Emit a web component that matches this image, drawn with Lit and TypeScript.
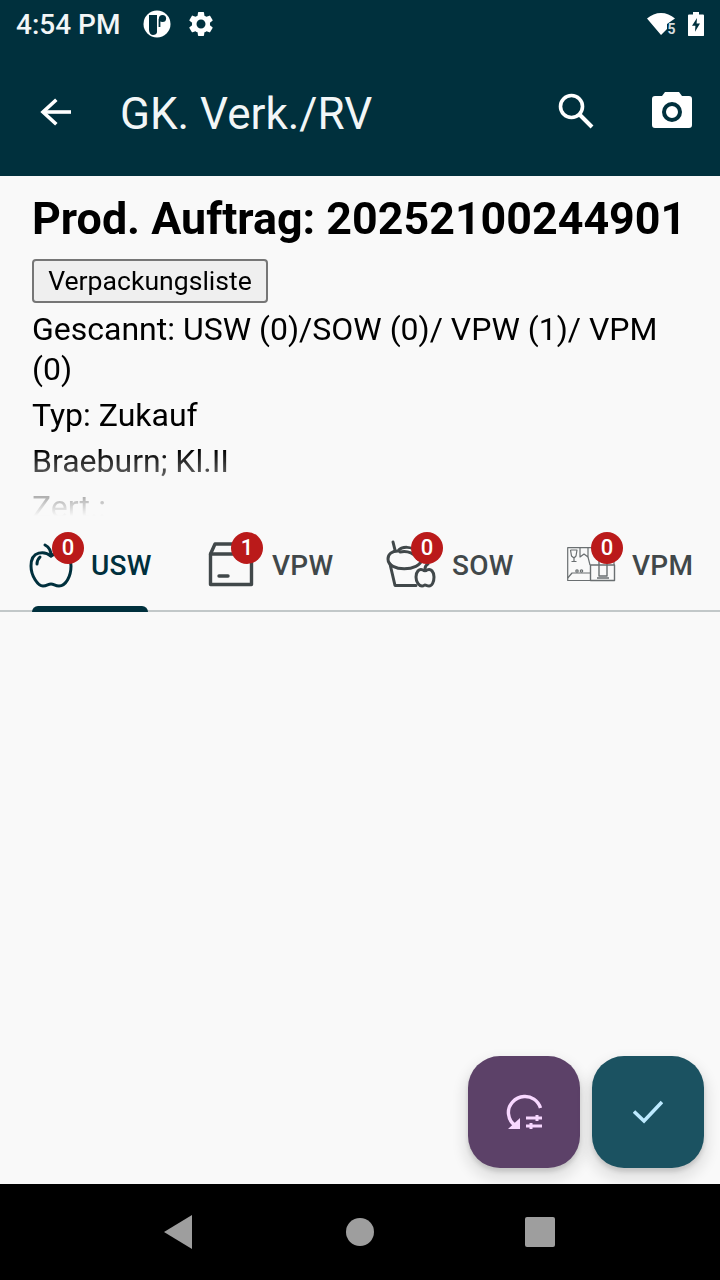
import { LitElement, html, css, svg } from 'lit'
import { customElement } from 'lit/decorators.js'

const appleIcon = svg`<g fill="none" stroke="currentColor" stroke-width="3" stroke-linecap="round" stroke-linejoin="round">
	<path d="M22 14 C16 9 2 8 2 24 C2 34 9 44 14 44 C18 44 19 42 22 42 C25 42 26 44 30 44 C37 44 42 34 42 24 C42 9 28 9 22 14Z" />
	<path d="M16 3 C20 5 22 9 22 14" />
	<path d="M8 22 C8 19 9 17 11 15" />
</g>`

const boxIcon = svg`<g fill="none" stroke="currentColor" stroke-width="3.4" stroke-linecap="round" stroke-linejoin="round">
	<path d="M2.5 13 L2.5 43.5 L43.5 43.5 L43.5 13 Z" />
	<path d="M2.5 13 L7 3 L40 3 L43.5 13" />
	<path d="M11 35 L20 35" />
</g>`

const bucketIcon = svg`<g fill="none" stroke="currentColor" stroke-width="3" stroke-linecap="round" stroke-linejoin="round">
	<path d="M2 19 C2 32 34 32 36 19 C36 14 33 12 31 12 C26 6 16 6 12 11 C6 11 2 14 2 19Z" />
	<path d="M4 24 L9 45.5 L30 45.5" />
	<path d="M7 2 L9 10" />
	<path d="M14 12 C22 10 29 14 32 19" />
	<path d="M37 30 C33 28 30 32 30 37 C30 42 33 46 36 46 C38 46 38 45 39 45 C40 45 41 46 43 46 C46 46 48 42 48 37 C48 32 45 28 41 30 C40 31 38 31 37 30Z" />
	<path d="M39 29 C39 27 40 25 42 24" />
</g>`

const cartonIcon = svg`<g fill="none" stroke="currentColor" stroke-width="1.2" stroke-linejoin="round">
	<path d="M23 33.5 L0.7 33.5 L0.7 0.7 L47 0.7 L47 18" />
	<path d="M13 0.7 L13 10 L17 7 L21 10 L21 0.7" />
	<path d="M21 10 L23 18" />
	<path d="M3.5 3 L10 3 L9 9 L7 11 L7 14 M4.5 14.5 L9.5 14.5 M3.5 3 L4.5 9 L7 11" />
	<path d="M0.7 31 L5 26 L23 26" />
	<path d="M23.5 18 L47.5 18 L47.5 33.5 L23.5 33.5 Z" stroke-width="1.4" />
	<path d="M32 14 L32 29 L40 29 L40 14 M30 31 L42 31" stroke-width="1.4" />
	<circle cx="10" cy="24" r="1.2" />
	<circle cx="14.5" cy="24" r="1.2" />
</g>`

type Tab = { label: string; count: number; icon: unknown; active?: boolean; variant: string; w: number; h: number }

const tabs: Tab[] = [
	{ label: 'USW', count: 0, icon: appleIcon, active: true, variant: 'apple', w: 44, h: 46 },
	{ label: 'VPW', count: 1, icon: boxIcon, variant: 'box', w: 46, h: 46 },
	{ label: 'SOW', count: 0, icon: bucketIcon, variant: 'bucket', w: 50, h: 48 },
	{ label: 'VPM', count: 0, icon: cartonIcon, variant: 'carton', w: 48, h: 35 },
]

@customElement('app-root')
export class AppRoot extends LitElement {
	static styles = css`
		:host {
			display: block;
			width: 720px;
			height: 1280px;
			overflow: hidden;
			font-family: Roboto, 'Noto Sans', sans-serif;
			background: #f9f9f9;
		}

		.screen {
			display: flex;
			flex-direction: column;
			height: 1280px;
			position: relative;
		}

		/* Status bar */
		.status {
			flex: none;
			height: 48px;
			display: flex;
			align-items: center;
			padding: 0 16px;
			background: #00303d;
			color: #fff;
		}
		.time {
			font-size: 28px;
			font-weight: 500;
			margin-right: 23px;
			color: #f2f6f7;
		}
		.status svg {
			display: block;
		}
		.gear {
			margin-left: 15px;
		}
		.status-right {
			margin-left: auto;
			display: flex;
			align-items: center;
			gap: 10px;
		}

		/* App bar */
		.appbar {
			flex: none;
			height: 128px;
			display: flex;
			align-items: center;
			background: #00303d;
			color: #fff;
			padding: 0 28px 0 39px;
			box-sizing: border-box;
		}
		.appbar h1 {
			margin: 4px 0 0 47px;
			font-size: 44px;
			font-weight: 400;
			flex: 1;
			color: #f2f6f7;
		}
		.appbar svg {
			display: block;
		}
		.search {
			margin-top: -2px;
		}
		.camera {
			margin: -4px 0 0 58px;
		}

		/* Order info */
		.info {
			flex: none;
			height: 344px;
			box-sizing: border-box;
			padding: 18px 24px 0 32px;
			overflow: hidden;
			color: #000;
			-webkit-mask-image: linear-gradient(to bottom, #000 274px, transparent 340px);
			mask-image: linear-gradient(to bottom, #000 274px, transparent 340px);
		}
		.info h2 {
			margin: 0;
			font-size: 44.8px;
			line-height: 50px;
			font-weight: 700;
			white-space: nowrap;
		}
		.list-btn {
			display: block;
			margin: 15px 0 6px;
			width: 236px;
			height: 44px;
			box-sizing: border-box;
			padding: 0 0 2px;
			border: 2px solid #767676;
			border-radius: 4px;
			background: #efefef;
			color: #000;
			font: 400 26.6px Roboto, sans-serif;
		}
		.info p {
			margin: 0 0 6px;
			font-size: 32px;
			line-height: 40px;
		}

		/* Tabs */
		.tabs {
			flex: none;
			height: 92px;
			box-sizing: border-box;
			display: flex;
			border-bottom: 2px solid #c2c8c9;
			position: relative;
		}
		.tab {
			flex: 1;
			position: relative;
			color: #41484a;
		}
		.tab.active {
			color: #00303d;
		}
		.tab-icon {
			position: absolute;
			display: block;
			overflow: visible;
		}
		.apple .tab-icon { left: 29px; top: 22px; }
		.box .tab-icon { left: 28px; top: 21px; }
		.bucket .tab-icon { left: 26px; top: 20px; }
		.carton .tab-icon { left: 27px; top: 27px; color: #6a6f71; }
		.badge {
			position: absolute;
			top: 12px;
			left: 52px;
			width: 32px;
			height: 32px;
			border-radius: 50%;
			background: #ba1a1a;
			color: #fff;
			font-size: 22px;
			font-weight: 500;
			line-height: 32px;
			text-align: center;
		}
		.box .badge, .bucket .badge, .carton .badge { left: 51px; }
		.tab-label {
			position: absolute;
			left: 92px;
			top: 29px;
			font-size: 28px;
			line-height: 34px;
			font-weight: 500;
			letter-spacing: 0.3px;
		}
		.apple .tab-label { left: 91px; }
		.indicator {
			position: absolute;
			left: 32px;
			bottom: -2px;
			width: 116px;
			height: 6px;
			border-radius: 6px 6px 0 0;
			background: #00303d;
		}

		.body {
			flex: 1;
		}

		/* Floating buttons */
		.fabs {
			position: absolute;
			right: 16px;
			bottom: 112px;
			display: flex;
			gap: 12px;
		}
		.fab {
			width: 112px;
			height: 112px;
			border-radius: 32px;
			display: flex;
			align-items: center;
			justify-content: center;
			box-shadow: 0 8px 12px 6px rgba(0, 0, 0, 0.08), 0 4px 4px rgba(0, 0, 0, 0.14);
		}
		.fab.purple {
			background: #5c4168;
			color: #f8d8ff;
		}
		.fab.teal {
			background: #1b5261;
			color: #bdeaff;
		}

		/* Navigation bar */
		.nav {
			flex: none;
			height: 96px;
			background: #000;
			display: flex;
			align-items: center;
			justify-content: center;
		}
		.nav-slot {
			width: 181px;
			display: flex;
			justify-content: center;
		}
		.nav svg {
			display: block;
		}
		.nav-back {
			margin-right: 3px;
		}
		.nav-recent {
			margin-right: 2px;
		}
	`

	render() {
		return html`
			<div class="screen">
				<div class="status">
					<span class="time">4:54 PM</span>
					<svg width="28" height="28" viewBox="0 0 28 28">
						<circle cx="14" cy="14" r="13.5" fill="#fff" />
						<path d="M6 5 L14 5 L14 22 C14 24 12 25 10 25 C8 25 6 23 6 20 Z" fill="#00303d" />
						<circle cx="19.5" cy="8.5" r="3.6" fill="#00303d" />
						<path d="M16.5 9 L16.5 17" stroke="#00303d" stroke-width="1.8" />
					</svg>
					<svg class="gear" width="30" height="30" viewBox="0 0 24 24" fill="#fff">
						<path d="M19.14 12.94c.04-.3.06-.61.06-.94 0-.32-.02-.64-.07-.94l2.03-1.58a.49.49 0 0 0 .12-.61l-1.92-3.32a.488.488 0 0 0-.59-.22l-2.39.96c-.5-.38-1.03-.7-1.62-.94l-.36-2.54a.484.484 0 0 0-.48-.41h-3.84c-.24 0-.43.17-.47.41l-.36 2.54c-.59.24-1.13.57-1.62.94l-2.39-.96c-.22-.08-.47 0-.59.22L2.74 8.87c-.12.21-.08.47.12.61l2.03 1.58c-.05.3-.09.63-.09.94s.02.64.07.94l-2.03 1.58a.49.49 0 0 0-.12.61l1.92 3.32c.12.22.37.29.59.22l2.39-.96c.5.38 1.03.7 1.62.94l.36 2.54c.05.24.24.41.48.41h3.84c.24 0 .44-.17.47-.41l.36-2.54c.59-.24 1.13-.56 1.62-.94l2.39.96c.22.08.47 0 .59-.22l1.92-3.32c.12-.22.07-.47-.12-.61l-2.01-1.58zM12 15.6c-1.98 0-3.6-1.62-3.6-3.6s1.62-3.6 3.6-3.6 3.6 1.62 3.6 3.6-1.62 3.6-3.6 3.6z" />
					</svg>
					<div class="status-right">
						<svg width="32" height="26" viewBox="0 0 32 26">
							<path d="M1 7.5 C9 0 21 0 29 7.5 L21 13 L21 18 L15 24 Z" fill="#fff" />
							<text x="21.5" y="22.5" font-family="Roboto, sans-serif" font-size="14" font-weight="700" fill="#d5dcde">5</text>
						</svg>
						<svg width="16" height="24" viewBox="0 0 16 28" preserveAspectRatio="none">
							<path d="M5 0 L11 0 L11 3 L15 3 Q16 3 16 4 L16 27 Q16 28 15 28 L1 28 Q0 28 0 27 L0 4 Q0 3 1 3 L5 3 Z" fill="#fff" />
							<path d="M9 7 L4 16 L7.4 16 L7 23 L12 13.5 L8.6 13.5 Z" fill="#00303d" />
						</svg>
					</div>
				</div>

				<div class="appbar">
					<svg width="34" height="32" viewBox="0 0 34 32" fill="none" stroke="#fff" stroke-width="3.6" stroke-linecap="square">
						<path d="M32 16 L4 16" stroke-linecap="butt" />
						<path d="M16 5 L4 16 L16 27" />
					</svg>
					<h1>GK. Verk./RV</h1>
					<svg class="search" width="36" height="36" viewBox="0 0 36 36" fill="none" stroke="#fff" stroke-width="3.6">
						<circle cx="13.5" cy="13.5" r="11" />
						<path d="M21.5 21.5 L34 34" stroke-width="4" />
					</svg>
					<svg class="camera" width="40" height="36" viewBox="0 0 40 36">
						<path d="M13 0 L27 0 L30 4 L37 4 Q40 4 40 7 L40 33 Q40 36 37 36 L3 36 Q0 36 0 33 L0 7 Q0 4 3 4 L10 4 Z" fill="#fff" />
						<circle cx="20" cy="20" r="8" fill="#fff" stroke="#00303d" stroke-width="4" />
					</svg>
				</div>

				<div class="info">
					<h2>Prod. Auftrag: 20252100244901</h2>
					<button class="list-btn">Verpackungsliste</button>
					<p>Gescannt: USW (0)/SOW (0)/ VPW (1)/ VPM (0)</p>
					<p>Typ: Zukauf</p>
					<p>Braeburn; Kl.II</p>
					<p>Zert.:</p>
				</div>

				<div class="tabs">
					${tabs.map(
						(t) => html`
							<div class="tab ${t.variant} ${t.active ? 'active' : ''}">
								<svg class="tab-icon" width=${t.w} height=${t.h} viewBox="0 0 ${t.w} ${t.h}">${t.icon}</svg>
								<span class="badge">${t.count}</span>
								<span class="tab-label">${t.label}</span>
								${t.active ? html`<div class="indicator"></div>` : ''}
							</div>
						`,
					)}
				</div>

				<div class="body"></div>

				<div class="fabs">
					<div class="fab purple">
						<svg width="44" height="44" viewBox="0 0 44 44" fill="none" stroke="currentColor" stroke-width="3.4">
							<path d="M38.5 18 C36 10 29 6 22 6.5 C13 7 5.5 15 6.5 24 C7 29 9 33 14 36" />
							<path d="M18 28 L18 39 L6 39 Z" fill="currentColor" stroke="none" />
							<path d="M24 28 L40 28 M24 36 L40 36" stroke-width="3" />
							<path d="M35 25 L35 31 M29 33 L29 39" stroke-width="3" />
						</svg>
					</div>
					<div class="fab teal">
						<svg width="30" height="24" viewBox="0 0 30 24" fill="none" stroke="currentColor" stroke-width="3.6">
							<path d="M1 11.5 L11 21 L29 2" />
						</svg>
					</div>
				</div>

				<div class="nav">
					<div class="nav-slot">
						<svg class="nav-back" width="28" height="34" viewBox="0 0 28 34"><path d="M28 0 L28 34 L0 17 Z" fill="#9e9e9e" /></svg>
					</div>
					<div class="nav-slot">
						<svg width="28" height="28" viewBox="0 0 28 28"><circle cx="14" cy="14" r="14" fill="#9e9e9e" /></svg>
					</div>
					<div class="nav-slot">
						<svg class="nav-recent" width="30" height="30" viewBox="0 0 30 30"><rect width="30" height="30" rx="2" fill="#9e9e9e" /></svg>
					</div>
				</div>
			</div>
		`
	}
}
